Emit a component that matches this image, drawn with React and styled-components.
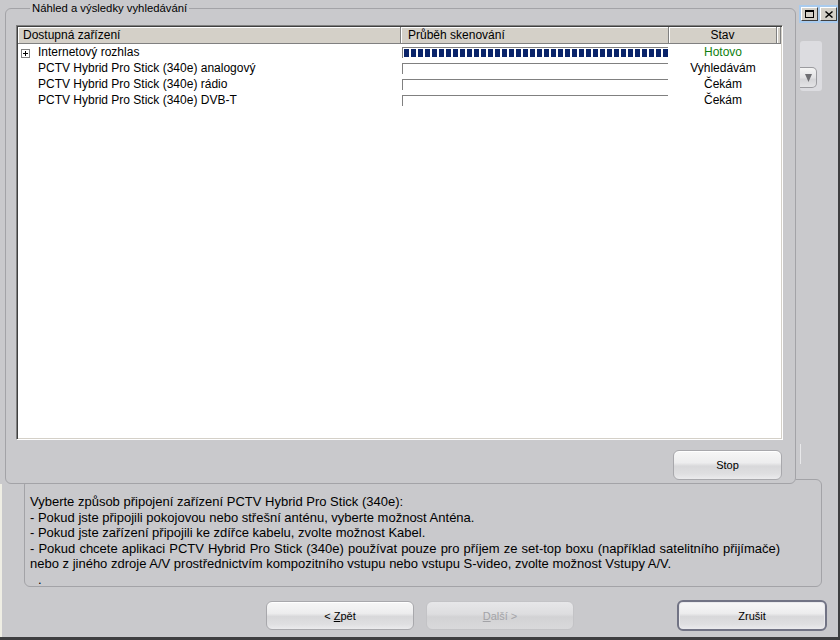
import React from "react";
import styled, { createGlobalStyle } from "styled-components";

const GlobalStyle = createGlobalStyle`
  html, body {
    margin: 0;
    padding: 0;
    background: #c9c9cc;
  }
  body {
    font-family: "Liberation Sans", Arial, sans-serif;
    font-size: 12px;
    color: #000;
  }
`;

const Window = styled.div`
  box-sizing: border-box;
  width: 840px;
  height: 640px;
  background: #c9c9cc;
  border-right: 2px solid #3e3e40;
  border-bottom: 3px solid #3e3e40;
  display: flex;
  flex-direction: column;
  overflow: hidden;
`;

const TopArea = styled.div`
  display: flex;
  height: 484px;
  position: relative;
  z-index: 1;
`;

const GroupBox = styled.fieldset`
  box-sizing: border-box;
  flex-shrink: 0;
  margin: 0 0 0 5px;
  width: 791px;
  height: 484px;
  min-width: 0;
  padding: 9px 12px 3px 10px;
  border: 1px solid #a3a3a7;
  border-radius: 6px;
  background: #c9c9cc;
  display: flex;
  flex-direction: column;
`;

const Legend = styled.legend`
  margin-left: 14px;
  padding: 0 2px;
  font-size: 11.3px;
  line-height: 16px;
`;

const ListView = styled.div`
  box-sizing: border-box;
  height: 415px;
  background: #fff;
  border: 1px solid;
  border-color: #808080 #ffffff #ffffff #808080;
  box-shadow: inset 1px 1px 0 #404040, inset -1px -1px 0 #d4d0c8;
  padding: 1px;
  display: flex;
  flex-direction: column;
`;

const columns = "383px 268px 108px 1fr";

const HeaderRow = styled.div`
  display: grid;
  grid-template-columns: ${columns};
  height: 17px;
`;

const HeaderCell = styled.div`
  box-sizing: border-box;
  background: #d4d0c8;
  border-right: 1px solid #808080;
  border-bottom: 1px solid #808080;
  box-shadow: inset 1px 1px 0 #ffffff;
  line-height: 17px;
  padding: 0 ${(p) => (p.$pad ? p.$pad : 0)}px;
  text-align: ${(p) => (p.$center ? "center" : "left")};
  white-space: nowrap;
  overflow: hidden;
`;

const Row = styled.div`
  display: grid;
  grid-template-columns: ${columns};
  height: 16px;
  line-height: 17px;
`;

const NameCell = styled.div`
  display: flex;
  align-items: center;
  white-space: nowrap;
`;

const ExpandSlot = styled.span`
  width: 20px;
  height: 16px;
  display: flex;
  align-items: center;
  padding: 1px 0 0 3px;
  box-sizing: border-box;
`;

const ProgressCell = styled.div`
  padding: 3px 0 0 1px;
`;

const ProgressTrack = styled.div`
  box-sizing: border-box;
  width: 266px;
  height: 11px;
  border-top: 1px solid #808080;
  border-left: 1px solid #808080;
  padding: 1px 0 1px 1px;
`;

const ProgressFill = styled.div`
  height: 100%;
  background: repeating-linear-gradient(
    to right,
    #0a246a 0,
    #0a246a 5px,
    transparent 5px,
    transparent 7px
  );
`;

const StatusCell = styled.div`
  text-align: center;
  color: ${(p) => (p.$done ? "#0f7f0f" : "#000")};
  white-space: nowrap;
`;

const GroupFooter = styled.div`
  display: flex;
  justify-content: flex-end;
  margin-top: 10px;
  padding-right: 1px;
`;

const Button = styled.button`
  box-sizing: border-box;
  width: ${(p) => p.$w || 148}px;
  height: ${(p) => p.$h || 29}px;
  padding: 0;
  font-family: "Liberation Sans", Arial, sans-serif;
  font-size: 11px;
  color: #000;
  border: 1px solid #a8a8ac;
  border-radius: 6px;
  background: linear-gradient(
    to bottom,
    #f7f7f7 0%,
    #ededee 42%,
    #d8d8da 54%,
    #dfdfe1 82%,
    #ebebed 100%
  );
  box-shadow: inset 0 1px 0 #ffffff;
  cursor: default;

  &:disabled {
    color: #a3a3a7;
    border-color: #c3c3c6;
    background: linear-gradient(to bottom, #e7e7e9 0%, #dddddf 45%, #d2d2d4 55%, #d9d9db 100%);
    box-shadow: none;
  }
`;

const DefaultButton = styled(Button)`
  border: 2px solid #717384;
  box-shadow: inset 0 0 0 1px #e9e9ec;
`;

const SideStrip = styled.div`
  box-sizing: border-box;
  flex: 1;
  padding-left: 3px;
  display: flex;
  flex-direction: column;
  align-items: flex-start;
`;

const TitleButtons = styled.div`
  margin-top: 5px;
  display: flex;
  gap: 2px;
  padding: 2px;
  background: #a9cbee;
`;

const TitleButton = styled.span`
  box-sizing: border-box;
  width: 17px;
  height: 14px;
  background: #d4d0c8;
  border: 1px solid;
  border-color: #ffffff #404040 #404040 #ffffff;
  display: flex;
  align-items: center;
  justify-content: center;
`;

const ComboPanel = styled.div`
  margin: 18px 0 0 1px;
  width: 22px;
  height: 50px;
  background: #dcdce0;
  border-radius: 3px;
  padding-top: 26px;
  box-sizing: border-box;
`;

const ComboButton = styled.div`
  box-sizing: border-box;
  width: 17px;
  height: 21px;
  border: 1px solid #9b9b9f;
  border-left: none;
  border-radius: 0 5px 5px 0;
  background: linear-gradient(to bottom, #f4f4f4, #e2e2e4 50%, #d5d5d8 60%, #e4e4e6);
  display: flex;
  align-items: center;
  justify-content: center;
`;

const Tick = styled.div`
  margin: 353px 0 0 1px;
  width: 1px;
  height: 20px;
  background: #e8e8ea;
`;

const LowerArea = styled.div`
  flex: 1;
  display: flex;
  flex-direction: column;
  border-left: 2px solid #efeee4;
`;

const Description = styled.div`
  box-sizing: border-box;
  margin: -5px 0 0 22px;
  width: 798px;
  height: 108px;
  border: 1px solid #a3a3a7;
  border-radius: 6px;
  padding: 14px 41px 0 5px;
  line-height: 15.6px;
  font-size: 13px;
`;

const Line = styled.div`
  white-space: nowrap;
  ${(p) =>
    p.$justify &&
    `
    white-space: normal;
    text-align: justify;
    text-align-last: justify;
  `}
  padding-left: ${(p) => p.$indent || 0}px;
`;

const ButtonRow = styled.div`
  display: flex;
  align-items: center;
  height: 31px;
  margin-top: 13px;
  padding: 0 11px 0 264px;
`;

const Spacer = styled.div`
  flex: 1;
`;

const Gap = styled.div`
  width: 12px;
`;

const devices = [
  { name: "Internetový rozhlas", expandable: true, progress: 100, status: "Hotovo", done: true },
  { name: "PCTV Hybrid Pro Stick (340e) analogový", progress: 0, status: "Vyhledávám" },
  { name: "PCTV Hybrid Pro Stick (340e) rádio", progress: 0, status: "Čekám" },
  { name: "PCTV Hybrid Pro Stick (340e) DVB-T", progress: 0, status: "Čekám" },
];

function Expander() {
  return (
    <svg width="9" height="9" viewBox="0 0 9 9">
      <rect x="0.5" y="0.5" width="8" height="8" fill="#fff" stroke="#808080" />
      <path d="M2 4.5h5M4.5 2v5" stroke="#000" />
    </svg>
  );
}

function DeviceRow({ device }) {
  return (
    <Row>
      <NameCell>
        <ExpandSlot>{device.expandable && <Expander />}</ExpandSlot>
        {device.name}
      </NameCell>
      <ProgressCell>
        <ProgressTrack>
          {device.progress > 0 && <ProgressFill style={{ width: `${device.progress}%` }} />}
        </ProgressTrack>
      </ProgressCell>
      <StatusCell $done={device.done}>{device.status}</StatusCell>
      <div />
    </Row>
  );
}

export default function App() {
  return (
    <>
      <GlobalStyle />
      <Window>
        <TopArea>
          <GroupBox>
            <Legend>Náhled a výsledky vyhledávání</Legend>
            <ListView>
              <HeaderRow>
                <HeaderCell $pad={5}>Dostupná zařízení</HeaderCell>
                <HeaderCell $pad={7}>Průběh skenování</HeaderCell>
                <HeaderCell $center>Stav</HeaderCell>
                <HeaderCell />
              </HeaderRow>
              {devices.map((d) => (
                <DeviceRow key={d.name} device={d} />
              ))}
            </ListView>
            <GroupFooter>
              <Button $w={109} $h={30}>Stop</Button>
            </GroupFooter>
          </GroupBox>
          <SideStrip>
            <TitleButtons>
              <TitleButton>
                <svg width="9" height="8" viewBox="0 0 9 8">
                  <rect x="0.5" y="0.5" width="8" height="7" fill="none" stroke="#000" />
                  <path d="M0 1.5h9" stroke="#000" />
                </svg>
              </TitleButton>
              <TitleButton>
                <svg width="8" height="7" viewBox="0 0 8 7">
                  <path d="M0.5 0.5l7 6M7.5 0.5l-7 6" stroke="#000" strokeWidth="1.4" />
                </svg>
              </TitleButton>
            </TitleButtons>
            <ComboPanel>
              <ComboButton>
                <svg width="7" height="8" viewBox="0 0 7 8">
                  <path d="M0 0h7L3.5 8z" fill="#6e6e72" />
                </svg>
              </ComboButton>
            </ComboPanel>
            <Tick />
          </SideStrip>
        </TopArea>
        <LowerArea>
          <Description>
            <Line>Vyberte způsob připojení zařízení PCTV Hybrid Pro Stick (340e):</Line>
            <Line>- Pokud jste připojili pokojovou nebo střešní anténu, vyberte možnost Anténa.</Line>
            <Line>- Pokud jste zařízení připojili ke zdířce kabelu, zvolte možnost Kabel.</Line>
            <Line $justify>
              - Pokud chcete aplikaci PCTV Hybrid Pro Stick (340e) používat pouze pro příjem ze set-top boxu (například satelitního přijímače)
            </Line>
            <Line>nebo z jiného zdroje A/V prostřednictvím kompozitního vstupu nebo vstupu S-video, zvolte možnost Vstupy A/V.</Line>
            <Line $indent={8}>.</Line>
          </Description>
          <ButtonRow>
            <Button>
              &lt; <u>Z</u>pět
            </Button>
            <Gap />
            <Button disabled>
              <u>D</u>alší &gt;
            </Button>
            <Spacer />
            <DefaultButton $w={150} $h={31}>Zrušit</DefaultButton>
          </ButtonRow>
        </LowerArea>
      </Window>
    </>
  );
}
